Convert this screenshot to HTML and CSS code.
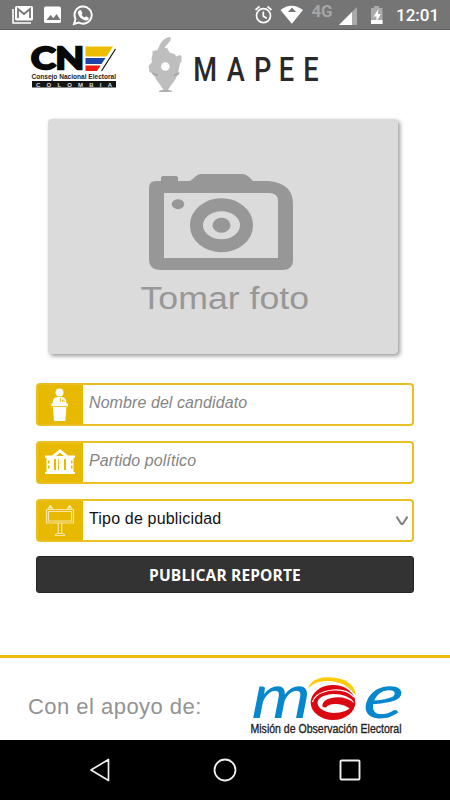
FILE: index.html
```html
<!DOCTYPE html>
<html lang="es">
<head>
<meta charset="utf-8">
<title>MAPEE</title>
<link rel="stylesheet" href="styles.css">
</head>
<body>
<div class="screen">
  <div class="status">
    <svg class="notifications" width="100" height="29" viewBox="0 0 100 29">
      <path d="M13 9v14h18" fill="none" stroke="#fff" stroke-width="1.6"/>
      <rect x="15" y="6" width="18" height="14.500" rx="1.500" fill="#fff"/>
      <path d="M18 18V9l6 5 6-5v9" fill="none" stroke="#757575" stroke-width="1.800"/>
      <rect x="44" y="6.500" width="17" height="16.500" rx="1.800" fill="#fff"/>
      <path d="M46.500 20l4-5 3 3.300 3-4.300 4 6z" fill="#757575"/>
      <path d="M74 24l1.500-4.900a8.600 8.600 0 1 1 3.300 3.400z" fill="none" stroke="#fff" stroke-width="1.900"/>
      <path d="M79.400 10.300l1.500-.3 1.600 3.200-1 1.300c.8 1.500 1.800 2.300 3.200 3l1.400-1.200 2.800 1.600c.1 1.800-1.400 2.600-3 2.600-4-.7-7.400-4-8-7.600 0-1 .7-2 1.500-2.600z" fill="#fff"/>
    </svg>
    <svg class="indicators" width="136" height="29" viewBox="250 0 136 29">
      <circle cx="263.500" cy="15.700" r="7" fill="none" stroke="#fff" stroke-width="1.700"/>
      <path d="M255.500 10l4-3.500M271.500 10l-4-3.500M263.300 11.500v4.700l3.500 2" fill="none" stroke="#fff" stroke-width="1.700"/>
      <path d="M280.500 10Q291.500 1.500 303 10L291.800 23.800z" fill="#fff"/>
      <path d="M288 12l4-4.500 4 4.500z" fill="#757575"/>
      <text x="311.500" y="16.500" class="network" textLength="21">4G</text>
      <path d="M339 25L357 7v18z" fill="#a9a9a9"/>
      <path d="M339 25l13-13v13z" fill="#fff"/>
      <path d="M371 8h3V6h5v2h3.500v16H371z" fill="#aaa"/>
      <path d="M371 20h11.500v4H371z" fill="#fff"/>
      <path d="M378.500 9l-5 7.500h3v5l4.300-7.500h-3z" fill="#fff"/>
    </svg>
    <span class="clock">12:01</span>
  </div>

  <header class="header">
    <svg class="cne-logo" width="90" height="48" viewBox="30 43 90 48">
      <text x="31" y="69" class="cne" textLength="53" lengthAdjust="spacingAndGlyphs">CN</text>
      <path d="M85.500 46.500h27.500l-6.500 10h-21z" fill="#edbd00"/>
      <path d="M85.500 58h20l-4 6h-16z" fill="#1d46a4"/>
      <path d="M85.500 65.500h15l-3.500 5.500h-11.500z" fill="#ee1c12"/>
      <path d="M115.500 49L101.500 71" stroke="#111" stroke-width="1.200"/>
      <text x="31.500" y="78.600" class="cne-name" textLength="84.500" lengthAdjust="spacingAndGlyphs">Consejo Nacional Electoral</text>
      <rect x="32" y="81" width="84" height="6.500" fill="#151515"/>
      <text x="36" y="86.500" class="cne-country" textLength="76">COLOMBIA</text>
    </svg>
    <svg class="map" width="36" height="60" viewBox="147 35 36 60">
      <path d="M170.500 37c-6 .5-10 5-11.500 10l-1.500 3-5 1 0 4-1 3 .5 4-3.500 4 1 6 4 2 3 6 4.500 6 2.500 4-4.500.8v1.200h13v-1.200l-4-.8 2.500-4 4.500-6 3-6 1-6 1-5 1.500-1v-6l-2-1-3 1.500-2-2.500-5-1.500-2-4-3-1 6-7z" fill="#bebebe"/>
      <path d="M152.500 73l5.500 2.200-4.500-.2zM179 72.500l-5 2.700 4.500-.7zM160 91h10" fill="none" stroke="#999" stroke-width=".8"/>
      <circle cx="165.300" cy="66.500" r="4.300" fill="#fff"/>
    </svg>
    <svg class="brand" width="130" height="44" viewBox="192 47 130 44">
      <text transform="scale(.8 1)" x="241.500 283.500 317.500 348.500 379" y="81" class="mapee">MAPEE</text>
    </svg>
  </header>

  <main class="content">
    <div class="photo">
      <svg width="146" height="98" viewBox="148 173 146 98">
        <path fill="#979797" fill-rule="evenodd" d="M149 188q0-7 7-7h5v-3q0-2 2-2h13q2 0 2 2v3h12l5-4q3-3 6-3h41q4 0 7 3l4 4h15q25 2 25 23v56q0 10-11 10h-121q-12 0-12-11zM164 193v65h114v-57q0-8-9-8z"/>
        <ellipse cx="178" cy="204.300" rx="6.200" ry="5" fill="#979797"/>
        <ellipse cx="221.500" cy="225.300" rx="25" ry="20.500" fill="none" stroke="#979797" stroke-width="13"/>
        <ellipse cx="221.500" cy="225.300" rx="9" ry="7.500" fill="#979797"/>
      </svg>
      <svg width="176" height="42" viewBox="136 276 176 42">
        <text x="140.500" y="308.500" class="take" textLength="168.500" lengthAdjust="spacingAndGlyphs">Tomar foto</text>
      </svg>
    </div>

    <div class="field">
      <div class="icon">
        <svg width="46" height="39" viewBox="38 385 46 39">
          <circle cx="59.500" cy="392.500" r="4" fill="#fff"/>
          <path d="M52.500 404q0-7 5-7h4q5 0 5 7zM51.500 403.500h16.500v3h-1.500L65.300 421H54l-1.200-14.500h-1.300z" fill="#fff"/>
          <path d="M60.500 402v-4M62.500 402q-1-3 1-2l1 2M52 406.500h15.500" stroke="#e7b900" fill="none" stroke-width=".8"/>
        </svg>
      </div>
      <span class="hint">Nombre del candidato</span>
    </div>
    <div class="field">
      <div class="icon">
        <svg width="46" height="39" viewBox="38 443 46 39">
          <path d="M45 474v-2h1.500v-14H45v-2.500h7l8-6.500 8 6.500h7v2.500h-1.500v14H75v2z" fill="#fff"/>
          <path d="M56 456l4-3.300 4 3.300zM54 459h2v11h-2zM58.200 459h.8v11h-.8zM64 459h2v11h-2zM48 460.500h1.500v3H48zM48 465.500h1.500v3H48zM71 460.500h1.500v3H71zM71 465.500h1.500v3H71z" fill="#e7b900"/>
        </svg>
      </div>
      <span class="hint">Partido político</span>
    </div>
    <div class="field">
      <div class="icon">
        <svg width="46" height="39" viewBox="38 501 46 39">
          <g fill="none" stroke="#f8e6a5" stroke-width="1.200">
            <path d="M46.500 509.500h27v13.500h-27zM48.500 511.500h23v9.500h-23zM58.300 523v11M61.700 523v11M55.500 535.500q0-2 3-2h3q3 0 3 2z"/>
            <path d="M48 509l2-3 3 3M67 509l3-3 2 3"/>
          </g>
          <circle cx="50.500" cy="507" r="1.500" fill="#fff2bf"/><circle cx="69.500" cy="507" r="1.500" fill="#fff2bf"/>
        </svg>
      </div>
      <span class="choice">Tipo de publicidad</span>
      <svg class="chevron" width="14" height="12" viewBox="0 0 14 12"><path d="M1.500 1.500L6 8.500Q7 9.500 8 8.500L12.500 1.500" fill="none" stroke="#808080" stroke-width="2"/></svg>
    </div>
    <div class="publish">PUBLICAR REPORTE</div>
  </main>

  <footer class="footer">
    <span class="support">Con el apoyo de:</span>
    <svg class="moe" width="160" height="80" viewBox="246 659 160 80">
      <text transform="translate(251 718) skewX(-3)" x="0" y="0" class="moe-letter" textLength="59" lengthAdjust="spacingAndGlyphs">m</text>
      <path d="M308 689q1-8 14-11.500 28-2 33.500 15v3q-13-18-37-13.500-6 1.500-10.500 7z" fill="#ffcb05"/>
      <ellipse cx="333" cy="702.500" rx="22.300" ry="17.500" fill="#db0812"/>
      <path d="M312.500 702q3-10 20.500-12 14-1 21 7" fill="none" stroke="#fff" stroke-width="1.200"/>
      <path d="M354 702q-7-8-20-8-16 1-16.500 9 1 8 15.500 10 15 0 19-8z" fill="#fff"/>
      <path d="M322.500 707q-1-8 12-9.500 12-1 19.500 5.500l-2 7q-9-7-17-6-7 0-9 3.500z" fill="#db0812"/>
      <text transform="translate(362 718) skewX(-6)" x="0" y="0" class="moe-letter" textLength="40" lengthAdjust="spacingAndGlyphs">e</text>
      <text x="250.500" y="733" class="moe-name" textLength="151" lengthAdjust="spacingAndGlyphs">Misión de Observación Electoral</text>
    </svg>
  </footer>

  <nav class="nav">
    <svg width="24" height="26" viewBox="0 0 24 26"><path d="M3 13L20.500 2.500v21z" fill="none" stroke="#eee" stroke-width="1.700" stroke-linejoin="round"/></svg>
    <svg width="24" height="26" viewBox="0 0 24 26"><circle cx="12" cy="13" r="10.500" fill="none" stroke="#eee" stroke-width="1.800"/></svg>
    <svg width="24" height="26" viewBox="0 0 24 26"><rect x="2.500" y="3.500" width="19" height="19" rx="1" fill="none" stroke="#eee" stroke-width="1.900"/></svg>
  </nav>
</div>
</body>
</html>
```
FILE: styles.css
```css
* { box-sizing: border-box; }
body { margin: 0; background: #fff; font-family: "Liberation Sans", sans-serif; }
svg { display: block; flex: none; overflow: visible; }
.screen { width: 450px; height: 800px; display: flex; flex-direction: column; overflow: hidden; }
.status { height: 30px; flex: none; display: flex; background: #757575; border-bottom: 1px solid #625e5e; }
.indicators { margin-left: 150px; }
.network { font: 700 17px Roboto, sans-serif; fill: #a5a5a5; }
.clock { margin-left: 10px; color: #fff; font: 500 17px/31px Roboto, sans-serif; white-space: nowrap; }
.header { height: 70px; flex: none; display: flex; align-items: flex-start; padding: 13px 0 0 30px; border-bottom: 1px solid #fcfcfc; }
.map { margin: -8px 9px 0 27px; }
.brand { margin-top: 4px; }
.cne { font: 700 31px Lato, sans-serif; fill: #080808; stroke: #080808; stroke-width: 2.4; }
.cne-name { font: 700 7.2px "Liberation Sans", sans-serif; fill: #222; }
.cne-country { font: 700 6px "Liberation Sans", sans-serif; fill: #ddd; }
.mapee { font: 500 34px Roboto, sans-serif; fill: #292929; }
.content { flex: 1; padding: 19px 36px 0; display: flex; flex-direction: column; }
.photo { width: 350px; height: 235px; flex: none; margin: 0 0 29px 12px; padding: 54px 0 0 100px; background: #dbdbdb; border-radius: 4px; box-shadow: 2px 2px 4px #999; }
.photo svg + svg { margin: 5px 0 0 -12px; }
.take { font: 31px "Liberation Sans", sans-serif; fill: #979797; }
.field { height: 43px; width: 378px; flex: none; margin-bottom: 15px; display: flex; border: 2px solid #e9bf22; border-radius: 4px; background: #fff; }
.icon { width: 45px; flex: none; display: flex; justify-content: center; background: #e7b900; }
.hint { margin-left: 6px; color: #858585; font: italic 16px/35px "Liberation Sans", sans-serif; letter-spacing: .08px; }
.choice { margin-left: 6px; flex: 1; color: #111; font: 16px/35px "Liberation Sans", sans-serif; letter-spacing: .17px; }
.chevron { margin: 14px 3px 0 0; }
.publish { height: 37px; width: 378px; margin-top: -1px; border-radius: 3px; background: #333; border: 1px solid #242424; color: #fff; text-align: center; font: 700 15.5px/36px "Open Sans", sans-serif; letter-spacing: .15px; }
.footer { height: 85px; flex: none; border-top: 3px solid #edbd0b; display: flex; padding-left: 28px; }
.support { width: 218px; color: #939393; font-size: 22px; line-height: 97px; letter-spacing: .47px; }
.moe { margin-top: 1px; }
.moe-letter { font: italic 400 62px Lato, sans-serif; fill: #0787cd; }
.moe-name { font: 13.5px "Liberation Sans", sans-serif; fill: #222; stroke: #222; stroke-width: .35; }
.nav { height: 60px; flex: none; background: #000; display: flex; justify-content: center; align-items: center; gap: 101px; }
```
